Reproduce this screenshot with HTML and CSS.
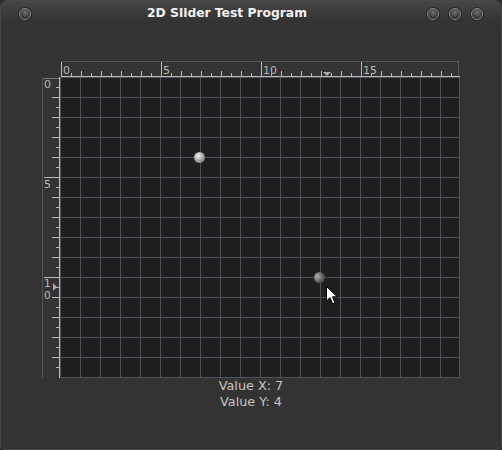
FILE: index.html
```html
<!DOCTYPE html>
<html>
<head>
<meta charset="utf-8">
<link rel="stylesheet" href="styles.css">
</head>
<body>
<div class="window">
  <div class="titlebar">
    <span class="wbtn"></span>
    <span class="title">2D Slider Test Program</span>
    <div class="wbtns"><span class="wbtn"></span><span class="wbtn"></span><span class="wbtn"></span></div>
  </div>
  <div class="content">
    <div class="slider">
      <div class="corner"></div>
      <svg class="hruler" width="400" height="16" viewBox="0 0 400 16">
        <g stroke="#555" stroke-width="1">
          <line x1="1" y1="0.5" x2="399" y2="0.5"/>
          <line x1="398.5" y1="0" x2="398.5" y2="16"/>
        </g>
        <line x1="1" y1="15.5" x2="400" y2="15.5" stroke="#b8b8b8"/>
        <g id="hticks" stroke="#b8b8b8" stroke-width="1"></g>
        <g class="rtext">
          <text x="3" y="13">0</text>
          <text x="103" y="13">5</text>
          <text x="203" y="13">10</text>
          <text x="303" y="13">15</text>
        </g>
        <polygon points="263,11 271,11 267,15" fill="#aaa"/>
      </svg>
      <svg class="vruler" width="18" height="301" viewBox="0 0 18 301">
        <line x1="0.5" y1="1" x2="0.5" y2="301" stroke="#555"/>
        <line x1="1" y1="1.5" x2="17" y2="1.5" stroke="#777"/>
        <line x1="17.5" y1="0" x2="17.5" y2="301" stroke="#b8b8b8"/>
        <g id="vticks" stroke="#b8b8b8" stroke-width="1"></g>
        <g class="rtext">
          <text x="2" y="11">0</text>
          <text x="2" y="111">5</text>
          <text class="small" x="2" y="210">1</text>
          <text class="small" x="2" y="222">0</text>
        </g>
        <polygon points="11,206 11,214 15,210" fill="#aaa"/>
      </svg>
      <div class="plane">
        <span class="ball" style="left:139px;top:80px"></span>
        <span class="ball hover" style="left:259px;top:200px"></span>
        <svg class="cursor" width="13" height="19" viewBox="0 0 13 19">
          <path d="M0.5 0.5 L0.5 15 L4 11.6 L6.6 17.8 L9 16.8 L6.5 10.8 L11.2 10.8 Z" fill="#fff" stroke="#000" stroke-width="1"/>
        </svg>
      </div>
    </div>
    <div class="values">
      <div>Value X: 7</div>
      <div>Value Y: 4</div>
    </div>
  </div>
</div>
<script>
(function(){
  var ns="http://www.w3.org/2000/svg";
  var h=document.getElementById("hticks");
  for(var k=0;k<40;k++){
    var x=1.5+10*k, y1;
    if(k%10===0) y1=1; else if(k%2===0) y1=10; else y1=12;
    var l=document.createElementNS(ns,"line");
    l.setAttribute("x1",x);l.setAttribute("x2",x);l.setAttribute("y1",y1);l.setAttribute("y2",15);
    h.appendChild(l);
  }
  var v=document.getElementById("vticks");
  for(var j=1;j<30;j++){
    var y=0.5+10*j, x1;
    if(j%10===0) x1=2; else if(j%2===0) x1=10; else x1=14;
    var m=document.createElementNS(ns,"line");
    m.setAttribute("y1",y);m.setAttribute("y2",y);m.setAttribute("x1",x1);m.setAttribute("x2",17);
    v.appendChild(m);
  }
})();
</script>
</body>
</html>
```
FILE: styles.css
```css
html, body {
  margin: 0;
  padding: 0;
  background: #2a2a2a;
}
.window {
  width: 502px;
  height: 450px;
  box-sizing: border-box;
  background: #333333;
  border: 1px solid #484848;
  border-radius: 7px 7px 5px 5px;
  display: flex;
  flex-direction: column;
  overflow: hidden;
  font-family: "DejaVu Sans", sans-serif;
}
.titlebar {
  height: 25px;
  flex: none;
  display: flex;
  align-items: center;
  padding: 0 18px 0 18px;
  background: linear-gradient(#474747, #353535 70%, #333333);
  position: relative;
}
.title {
  position: absolute;
  left: 0;
  right: 0;
  top: 5px;
  margin-left: -48px;
  text-align: center;
  font-weight: bold;
  font-size: 12.3px;
  color: #f2f2f2;
}
.wbtns {
  margin-left: auto;
  display: flex;
  gap: 10px;
}
.wbtn {
  width: 12px;
  height: 12px;
  border-radius: 50%;
  box-sizing: border-box;
  border: 1px solid #8a8a8a;
  background: radial-gradient(circle at 50% 35%, #707070, #303030 75%);
  box-shadow: 0 0 0 1px #262626;
  display: block;
}
.content {
  flex: 1;
  padding: 35px 0 0 41px;
}
.slider {
  display: grid;
  grid-template-columns: 18px 400px;
  grid-template-rows: 16px 301px;
}
.hruler, .vruler {
  display: block;
}
.rtext text {
  font-family: "DejaVu Sans", sans-serif;
  font-size: 11px;
  fill: #b8b8b8;
}
.rtext text.small {
  font-size: 10.5px;
}
.plane {
  position: relative;
  background-color: #1f1f1f;
  background-image:
    linear-gradient(to right, #50505a 1px, transparent 1px),
    linear-gradient(to bottom, #50505a 1px, transparent 1px);
  background-size: 20px 20px;
  box-shadow: inset -1px 0 0 #50505a, inset 0 -1px 0 #50505a;
}
.ball {
  position: absolute;
  width: 11px;
  height: 11px;
  margin: -5px 0 0 -5px;
  border-radius: 50%;
  background: radial-gradient(circle at 40% 35%, #f4f4f4, #a8a8a8 45%, #5a5a5a 100%);
}
.ball.hover {
  background: radial-gradient(circle at 30% 40%, #b0b0b0, #5c5c5c 55%, #2e2e2e 100%);
}
.cursor {
  position: absolute;
  left: 266px;
  top: 209px;
}
.values {
  width: 418px;
  text-align: center;
  color: #c4c4c4;
  font-size: 12.8px;
  line-height: 16px;
}
```
